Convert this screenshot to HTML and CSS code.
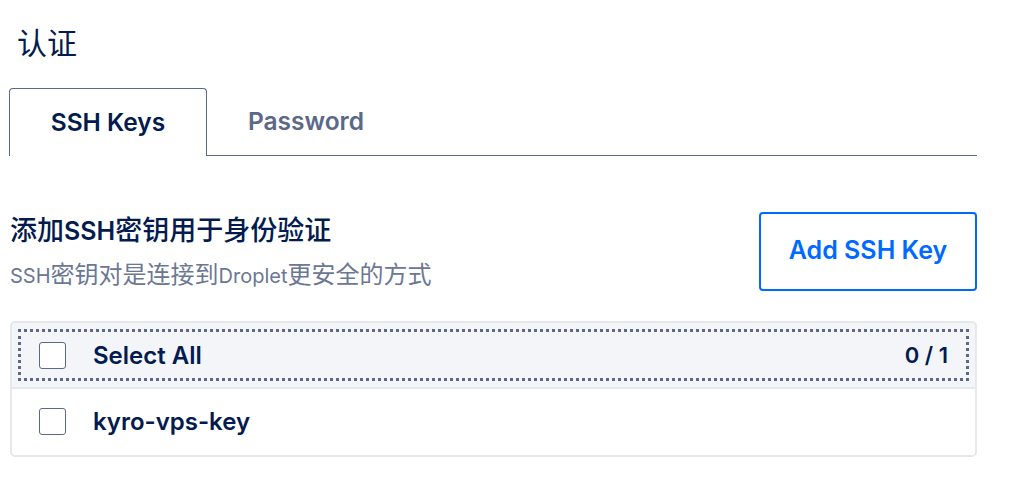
FILE: index.html
```html
<!DOCTYPE html>
<html lang="zh">
<head>
<meta charset="utf-8">
<link rel="stylesheet" href="styles.css">
</head>
<body>
<div class="page">
  <h2 class="title">认证</h2>
  <div class="tabs">
    <div class="tab active">SSH Keys</div>
    <div class="tab">Password</div>
    <div class="tab-fill"></div>
  </div>
  <div class="section-head">
    <div class="section-text">
      <div class="section-title">添加<span class="lat">SSH</span>密钥用于身份验证</div>
      <div class="section-sub"><span class="lat">SSH</span>密钥对是连接到<span class="lat">Droplet</span>更安全的方式</div>
    </div>
    <button class="add-btn">Add SSH Key</button>
  </div>
  <div class="list">
    <div class="row row-head">
      <div class="row-inner focused">
        <span class="check"></span>
        <span class="label">Select All</span>
        <span class="count">0 / 1</span>
      </div>
    </div>
    <div class="row">
      <div class="row-inner">
        <span class="check"></span>
        <span class="label">kyro-vps-key</span>
      </div>
    </div>
  </div>
</div>
</body>
</html>
```

FILE: styles.css
```css
* { box-sizing: border-box; }
body {
  margin: 0;
  background: #fff;
  font-family: "Inter", "Noto Sans CJK SC", sans-serif;
  color: #031b4e;
}
.page {
  width: 977px;
  padding: 18px 0 0 9px;
}
.title {
  margin: 0 0 0 8px;
  font-family: "Noto Sans CJK SC", sans-serif;
  font-weight: 400;
  font-size: 30px;
  line-height: 46px;
  color: #031b4e;
}
.tabs {
  display: flex;
  margin-top: 24px;
  height: 68px;
}
.tab {
  width: 198px;
  display: flex;
  align-items: center;
  justify-content: center;
  font-size: 24.5px;
  font-weight: 600;
  color: #5b6987;
  border-bottom: 1px solid #5b6987;
  padding-bottom: 2px;
}
.tab.active {
  color: #031b4e;
  border: 1px solid #5b6987;
  border-bottom: none;
  border-radius: 4px 4px 0 0;
}
.tab-fill {
  flex: 1;
  border-bottom: 1px solid #5b6987;
}
.section-head {
  display: flex;
  justify-content: space-between;
  align-items: center;
  margin: 55px 0 0 1px;
}
.section-text {
  display: flex;
  flex-direction: column;
  gap: 12px;
  padding-top: 3px;
}
.section-title {
  font-size: 27px;
  font-weight: 500;
  color: #031b4e;
  line-height: 34px;
}
.section-title .lat {
  font-size: 25px;
  font-weight: 600;
}
.section-sub {
  font-size: 24px;
  color: #6b7795;
  line-height: 30px;
}
.section-sub .lat {
  font-size: 20px;
}
.add-btn {
  width: 218px;
  height: 79px;
  border: 2px solid #0069ff;
  border-radius: 4px;
  background: #fff;
  color: #0069ff;
  font-family: "Inter", sans-serif;
  font-size: 25px;
  font-weight: 600;
  padding: 0 0 2px;
}
.list {
  margin: 30px 0 0 1px;
  border: 2px solid #e5e8ed;
  border-radius: 5px;
  overflow: hidden;
}
.row {
  height: 66px;
  padding: 8px;
}
.row-head {
  background: #f3f5f9;
  border-bottom: 2px solid #e5e8ed;
}
.row-inner {
  height: 48px;
  display: flex;
  align-items: center;
  padding: 0 19px 0 19px;
}
.row-inner.focused {
  outline: 3px dotted #5b6987;
  outline-offset: -1px;
}
.check {
  width: 27px;
  height: 27px;
  border: 1px solid #5b6987;
  border-radius: 3px;
  background: #fff;
  flex: none;
}
.label {
  margin-left: 27px;
  font-size: 24px;
  font-weight: 600;
  color: #031b4e;
}
.count {
  margin-left: auto;
  font-size: 22px;
  font-weight: 600;
  color: #031b4e;
}
```
